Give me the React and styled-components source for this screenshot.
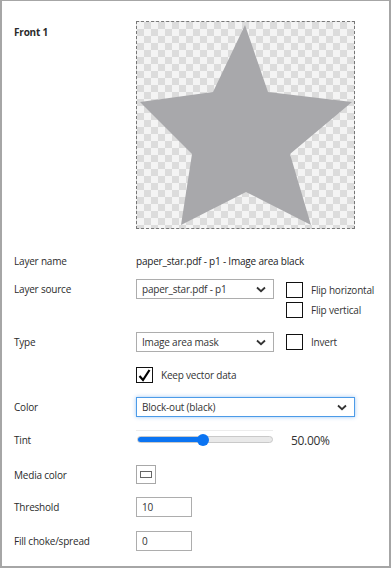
import React from "react";
import styled, { createGlobalStyle } from "styled-components";

const GlobalStyle = createGlobalStyle`
	html, body {
		margin: 0;
		padding: 0;
		background: #fff;
	}
	body {
		font-family: "Open Sans", "Noto Sans", sans-serif;
		font-size: 10px;
		letter-spacing: -0.2px;
		color: #333;
	}
`;

const Window = styled.div`
	box-sizing: border-box;
	width: 391px;
	height: 568px;
	border: 2px solid #a6a6a6;
	border-top-width: 1px;
	padding: 20px 0 0 12px;
	display: flex;
	flex-direction: column;
`;

const Row = styled.div`
	display: grid;
	grid-template-columns: 122px 1fr;
	align-items: ${props => props.$align || "center"};
	margin-top: ${props => props.$top || 0}px;
`;

const Label = styled.div`
	line-height: 16px;
	color: #2b2b2b;
	font-weight: ${props => (props.$bold ? 700 : 400)};
	margin-top: ${props => props.$offset || 0}px;
	white-space: nowrap;
`;

const Value = styled.div`
	line-height: 16px;
	color: #222;
	white-space: nowrap;
`;

const Preview = styled.div`
	box-sizing: border-box;
	width: 219px;
	height: 208px;
	border: 1px dashed #777;
	background-color: #f4f4f4;
	background-image:
		linear-gradient(45deg, #dcdcdc 25%, transparent 25%, transparent 75%, #dcdcdc 75%),
		linear-gradient(45deg, #dcdcdc 25%, transparent 25%, transparent 75%, #dcdcdc 75%);
	background-size: 14px 14px;
	background-position: 0 0, 7px 7px;

	svg {
		display: block;
	}
`;

const Controls = styled.div`
	display: flex;
	align-items: flex-start;
	gap: 12px;
`;

const SelectBox = styled.div`
	box-sizing: border-box;
	width: ${props => props.$width}px;
	height: 20px;
	border: 1px solid ${props => (props.$focus ? "#4c9be8" : "#adadad")};
	box-shadow: ${props => (props.$focus ? "0 0 4px rgba(40, 130, 230, 0.45)" : "none")};
	display: flex;
	align-items: center;
	justify-content: space-between;
	padding: 0 7px 0 5px;
	color: #333;
	background: #fff;
	white-space: nowrap;
`;

const CheckStack = styled.div`
	display: flex;
	flex-direction: column;
	gap: 4px;
	margin-top: ${props => props.$top || 0}px;
`;

const CheckRow = styled.label`
	display: flex;
	align-items: center;
	gap: 8px;
	color: #333;
	line-height: 16px;
	white-space: nowrap;
`;

const Box = styled.span`
	box-sizing: border-box;
	width: 17px;
	height: 16px;
	border: 1px solid #111;
	background: #fff;
	display: flex;
	align-items: center;
	justify-content: center;
	flex-shrink: 0;
`;

const SliderWrap = styled.div`
	display: flex;
	align-items: center;
	gap: 18px;
`;

const Track = styled.div`
	position: relative;
	width: 137px;
	height: 20px;
	border-top: 1px solid #ececec;
	box-sizing: border-box;
`;

const Rail = styled.div`
	position: absolute;
	left: 1px;
	right: 0;
	top: 5px;
	height: 7px;
	border-radius: 4px;
	background: #e9e9e9;
	border: 1px solid #c9c9c9;
	box-sizing: border-box;
	overflow: hidden;
`;

const Fill = styled.div`
	height: 100%;
	background: #0b74f2;
`;

const Thumb = styled.div`
	position: absolute;
	top: 3px;
	width: 12px;
	height: 12px;
	margin-left: -6px;
	border-radius: 50%;
	background: #0b74f2;
`;

const Percent = styled.div`
	font-size: 12px;
	letter-spacing: -0.3px;
	color: #333;
`;

const Swatch = styled.div`
	box-sizing: border-box;
	width: 20px;
	height: 19px;
	border: 1px solid #a8a8a8;
	display: flex;
	align-items: center;
	justify-content: center;
`;

const SwatchInner = styled.div`
	box-sizing: border-box;
	width: 12px;
	height: 7px;
	border: 1px solid #666;
	background: #fff;
`;

const NumberInput = styled.div`
	box-sizing: border-box;
	width: 56px;
	height: 20px;
	border: 1px solid #adadad;
	padding-left: 5px;
	display: flex;
	align-items: center;
	color: #333;
`;

const Chevron = () => (
	<svg width="10" height="7" viewBox="0 0 10 7">
		<path d="M1 1.5 L5 5.2 L9 1.5" fill="none" stroke="#333" strokeWidth="1.8" />
	</svg>
);

const Select = ({ width, focus, children }) => (
	<SelectBox $width={width} $focus={focus}>
		<span>{children}</span>
		<Chevron />
	</SelectBox>
);

const Checkbox = ({ checked, children }) => (
	<CheckRow>
		<Box>
			{checked && (
				<svg width="13" height="13" viewBox="0 0 13 13">
					<path d="M1.5 7 L5 11 L11.5 1" fill="none" stroke="#000" strokeWidth="2.2" />
				</svg>
			)}
		</Box>
		<span>{children}</span>
	</CheckRow>
);

const Slider = ({ value }) => (
	<Track>
		<Rail>
			<Fill style={{ width: `${value}%` }} />
		</Rail>
		<Thumb style={{ left: `${value}%` }} />
	</Track>
);

const App = () => (
	<>
		<GlobalStyle />
		<Window>
			<Row $align="start">
				<Label $bold $offset={3}>Front 1</Label>
				<Preview>
					<svg width="217" height="206" viewBox="0 0 217 206">
						<polygon
							fill="#a8a8ab"
							points="108,3 131,70 215,80 153,132 174,203 109,170 44,203 55,132 3,80 76,70"
						/>
					</svg>
				</Preview>
			</Row>

			<Row $top={24}>
				<Label>Layer name</Label>
				<Value>paper_star.pdf - p1 - Image area black</Value>
			</Row>

			<Row $top={10} $align="start">
				<Label $offset={2}>Layer source</Label>
				<Controls>
					<Select width={138}>paper_star.pdf - p1</Select>
					<CheckStack $top={3}>
						<Checkbox>Flip horizontal</Checkbox>
						<Checkbox>Flip vertical</Checkbox>
					</CheckStack>
				</Controls>
			</Row>

			<Row $top={14} $align="start">
				<Label $offset={2}>Type</Label>
				<Controls>
					<Select width={138}>Image area mask</Select>
					<CheckStack $top={2}>
						<Checkbox>Invert</Checkbox>
					</CheckStack>
				</Controls>
			</Row>

			<Row $top={15}>
				<span />
				<Checkbox checked>Keep vector data</Checkbox>
			</Row>

			<Row $top={14}>
				<Label>Color</Label>
				<Select width={219} focus>Block-out (black)</Select>
			</Row>

			<Row $top={13}>
				<Label>Tint</Label>
				<SliderWrap>
					<Slider value={49} />
					<Percent>50.00%</Percent>
				</SliderWrap>
			</Row>

			<Row $top={15}>
				<Label>Media color</Label>
				<Swatch>
					<SwatchInner />
				</Swatch>
			</Row>

			<Row $top={13}>
				<Label>Threshold</Label>
				<NumberInput>10</NumberInput>
			</Row>

			<Row $top={14}>
				<Label>Fill choke/spread</Label>
				<NumberInput>0</NumberInput>
			</Row>
		</Window>
	</>
);

export default App;
